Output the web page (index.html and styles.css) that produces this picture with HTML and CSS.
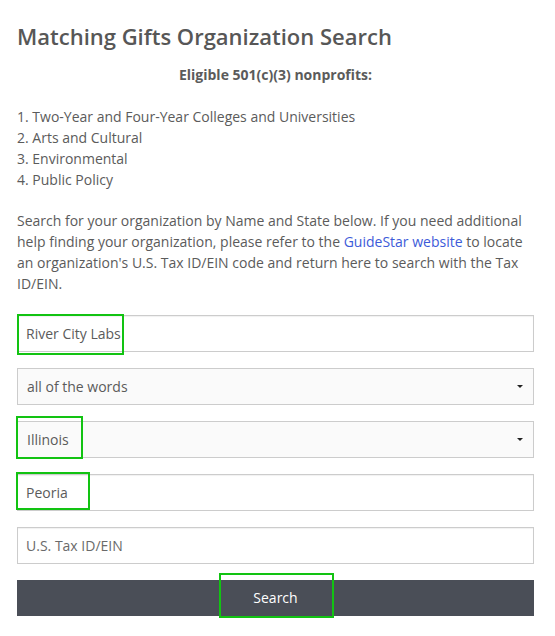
FILE: index.html
```html
<!DOCTYPE html>
<html lang="en">
<head>
<meta charset="utf-8">
<title>Matching Gifts Organization Search</title>
<link rel="stylesheet" href="styles.css">
</head>
<body>
<div class="page">
  <h1 class="title">Matching Gifts Organization Search</h1>
  <p class="eligible">Eligible 501(c)(3) nonprofits:</p>
  <p class="list">1. Two-Year and Four-Year Colleges and Universities<br>2. Arts and Cultural<br>3. Environmental<br>4. Public Policy</p>
  <p class="intro">Search for your organization by Name and State below. If you need additional help finding your organization, please refer to the <a class="link" href="#">GuideStar website</a> to locate an organization's U.S. Tax ID/EIN code and return here to search with the Tax ID/EIN.</p>
  <form class="form">
    <div class="field">
      <input class="input" type="text" value="River City Labs">
      <span class="mark mark-name"></span>
    </div>
    <div class="field">
      <div class="select"><span>all of the words</span><span class="caret"></span></div>
    </div>
    <div class="field">
      <div class="select"><span>Illinois</span><span class="caret"></span></div>
      <span class="mark mark-state"></span>
    </div>
    <div class="field">
      <input class="input" type="text" value="Peoria">
      <span class="mark mark-city"></span>
    </div>
    <div class="field">
      <input class="input" type="text" placeholder="U.S. Tax ID/EIN">
    </div>
    <div class="field">
      <button class="button" type="button">Search</button>
      <span class="mark mark-search"></span>
    </div>
  </form>
</div>
</body>
</html>
```
FILE: styles.css
```css
* { box-sizing: border-box; }
html, body { margin: 0; padding: 0; background: #fff; }
body {
  font-family: "Open Sans", "Liberation Sans", sans-serif;
  font-size: 14px;
  line-height: 21px;
  color: #5b5b5b;
}
.page {
  width: 517px;
  margin-left: 17px;
  padding-top: 20px;
}
.title {
  margin: 0 0 11px;
  font-size: 22px;
  line-height: 33px;
  font-weight: 600;
  color: #575757;
}
.eligible {
  margin: 0 0 21px;
  text-align: center;
  font-weight: 700;
}
.list { margin: 0 0 20px; }
.intro { margin: 0 0 21px; }
.link { color: #3d5bd9; text-decoration: none; }
.form { margin: 0; }
.field {
  position: relative;
  margin-bottom: 16px;
}
.input {
  display: block;
  width: 100%;
  height: 37px;
  margin: 0;
  padding: 0 8px;
  border: 1px solid #cccccc;
  border-radius: 0;
  background: #fff;
  box-shadow: inset 0 1px 1px rgba(0,0,0,0.06);
  font-family: inherit;
  font-size: 14px;
  color: #5b5b5b;
  outline: none;
}
.input::placeholder { color: #6a6a6a; opacity: 1; }
.select {
  display: flex;
  align-items: center;
  justify-content: space-between;
  height: 37px;
  padding: 0 10px 0 9px;
  border: 1px solid #cccccc;
  background: #fafafa;
  color: #5b5b5b;
}
.caret {
  width: 0;
  height: 0;
  border-left: 3px solid transparent;
  border-right: 3px solid transparent;
  border-top: 3px solid #222;
}
.button {
  display: block;
  width: 100%;
  height: 36px;
  margin: 0;
  border: 0;
  border-radius: 0;
  background: #4a4e57;
  color: #fff;
  font-family: inherit;
  font-size: 14px;
  line-height: 34px;
}
.mark {
  position: absolute;
  border: 2px solid #12c312;
  pointer-events: none;
}
.mark-name { left: 0; top: -1px; width: 107px; height: 41px; }
.mark-state { left: -1px; top: -5px; width: 67px; height: 43px; }
.mark-city { left: -1px; top: -2px; width: 74px; height: 38px; }
.mark-search { left: 202px; top: -7px; width: 115px; height: 45px; }
```
